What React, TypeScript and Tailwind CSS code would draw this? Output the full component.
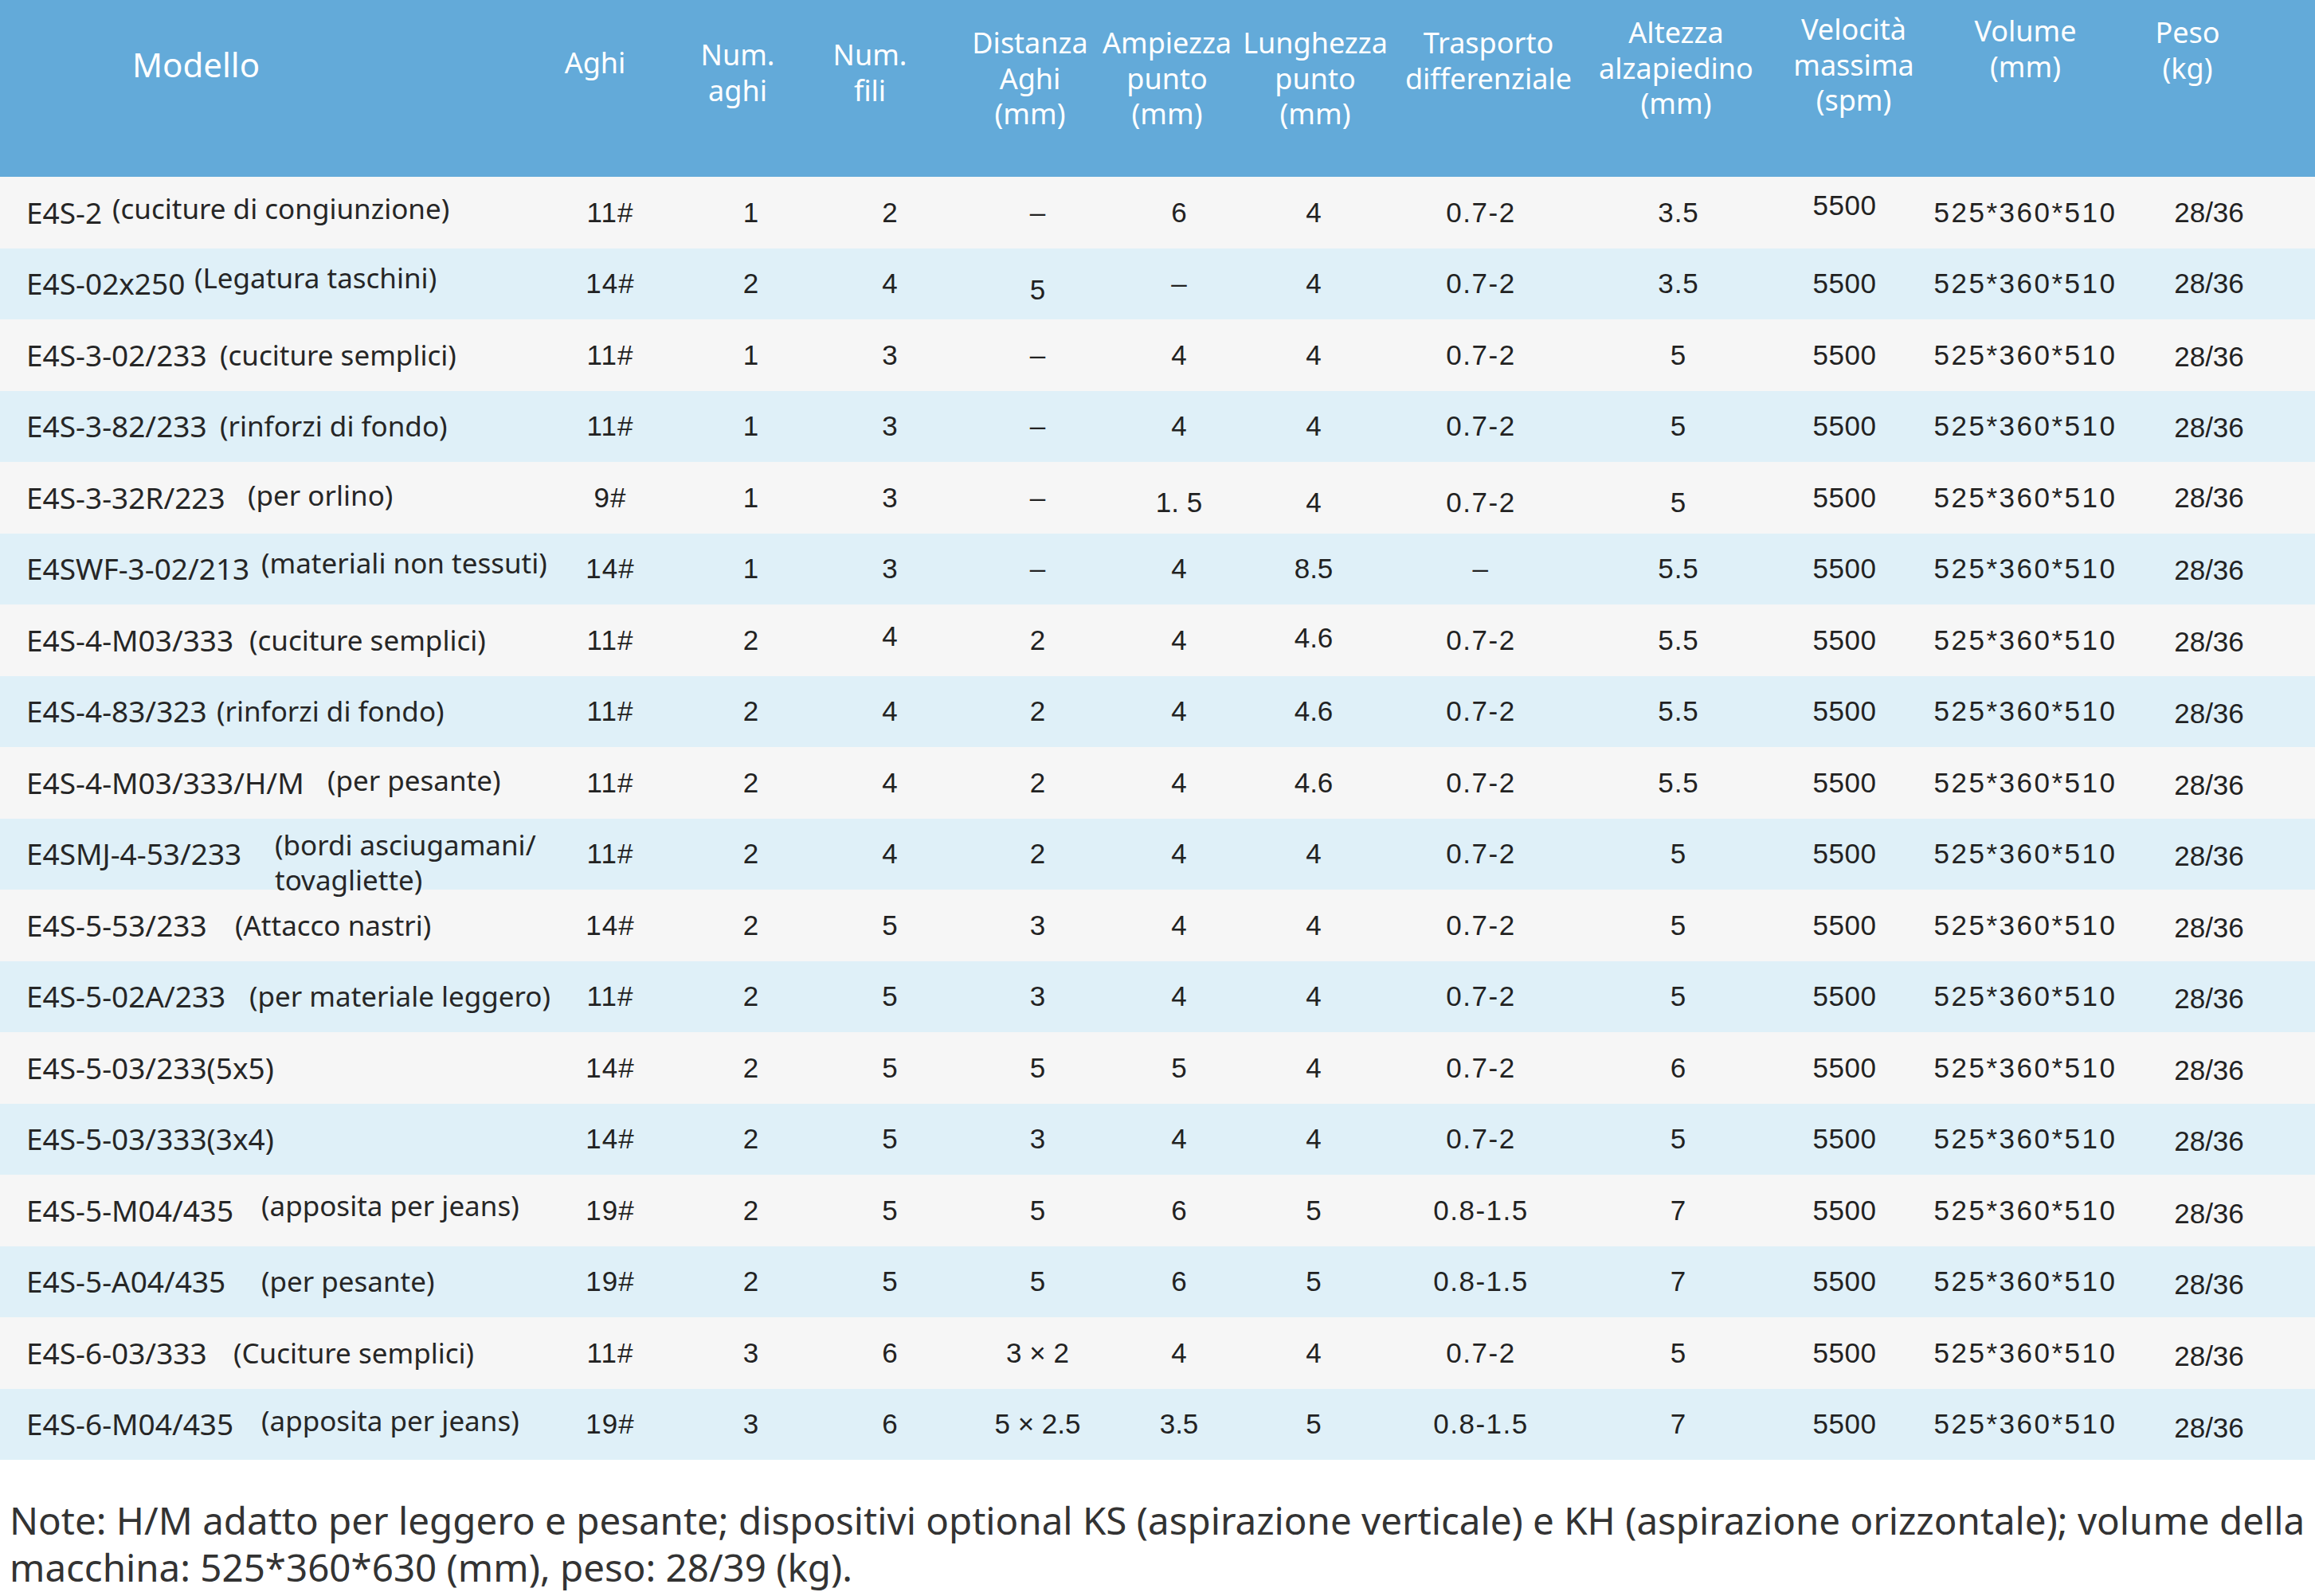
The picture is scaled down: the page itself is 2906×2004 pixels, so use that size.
import React from "react";

type Col = { hdr: string[]; hcls: string; dcls: string };

const cols: Col[] = [
  { hdr: ["Aghi"], hcls: "pt-[57px] pr-[61px]", dcls: "pr-[23px] tracking-[1px]" },
  { hdr: ["Num.", "aghi"], hcls: "pt-[47px] pr-[33px]", dcls: "" },
  { hdr: ["Num.", "fili"], hcls: "pt-[47px] pr-[57px]", dcls: "pr-[7px]" },
  { hdr: ["Distanza", "Aghi", "(mm)"], hcls: "pt-[32px] pr-[19px]", dcls: "" },
  { hdr: ["Ampiezza", "punto", "(mm)"], hcls: "pt-[32px] pr-[30px]", dcls: "" },
  { hdr: ["Lunghezza", "punto", "(mm)"], hcls: "pt-[32px] pr-[18px]", dcls: "pr-[22px]" },
  { hdr: ["Trasporto", "differenziale"], hcls: "pt-[32px]", dcls: "pr-[19px] tracking-[1.5px]" },
  { hdr: ["Altezza", "alzapiedino", "(mm)"], hcls: "pt-[19px] pl-[14px]", dcls: "pl-[20px] tracking-[1px]" },
  { hdr: ["Velocità", "massima", "(spm)"], hcls: "pt-[15px] pl-[15px]", dcls: "pr-[8px] tracking-[0.5px]" },
  { hdr: ["Volume", "(mm)"], hcls: "pt-[17px]", dcls: "tracking-[2.5px]" },
  { hdr: ["Peso", "(kg)"], hcls: "pt-[19px] pr-[71px]", dcls: "pr-[17px]" },
];

type Row = {
  model: string;
  desc?: string[];
  w: string;
  d?: string;
  v: string[];
  off?: Record<number, string>;
};

const V = "525*360*510";
const P = "28/36";
const D = "–";

const rows: Row[] = [
  { model: "E4S-2", desc: ["(cuciture di congiunzione)"], w: "w-[108px]", d: "mb-[10px]", v: ["11#", "1", "2", D, "6", "4", "0.7-2", "3.5", "5500", V, P], off: { 8: "pb-[18px]" } },
  { model: "E4S-02x250", desc: ["(Legatura taschini)"], w: "w-[211px]", d: "mb-[14px]", v: ["14#", "2", "4", "5", D, "4", "0.7-2", "3.5", "5500", V, P], off: { 3: "pt-[16px]" } },
  { model: "E4S-3-02/233", desc: ["(cuciture semplici)"], w: "w-[243px]", v: ["11#", "1", "3", D, "4", "4", "0.7-2", "5", "5500", V, P], off: { 10: "pt-[4px]" } },
  { model: "E4S-3-82/233", desc: ["(rinforzi di fondo)"], w: "w-[243px]", v: ["11#", "1", "3", D, "4", "4", "0.7-2", "5", "5500", V, P], off: { 10: "pt-[4px]" } },
  { model: "E4S-3-32R/223", desc: ["(per orlino)"], w: "w-[278px]", d: "mb-[6px]", v: ["9#", "1", "3", D, "1. 5", "4", "0.7-2", "5", "5500", V, P], off: { 4: "pt-[12px]", 5: "pt-[12px]", 6: "pt-[12px]", 7: "pt-[12px]" } },
  { model: "E4SWF-3-02/213", desc: ["(materiali non tessuti)"], w: "w-[295px]", d: "mb-[14px]", v: ["14#", "1", "3", D, "4", "8.5", D, "5.5", "5500", V, P], off: { 10: "pt-[4px]" } },
  { model: "E4S-4-M03/333", desc: ["(cuciture semplici)"], w: "w-[280px]", v: ["11#", "2", "4", "2", "4", "4.6", "0.7-2", "5.5", "5500", V, P], off: { 2: "pb-[10px]", 5: "pb-[6px]", 10: "pt-[4px]" } },
  { model: "E4S-4-83/323", desc: ["(rinforzi di fondo)"], w: "w-[239px]", v: ["11#", "2", "4", "2", "4", "4.6", "0.7-2", "5.5", "5500", V, P], off: { 10: "pt-[6px]" } },
  { model: "E4S-4-M03/333/H/M", desc: ["(per pesante)"], w: "w-[378px]", d: "mb-[6px]", v: ["11#", "2", "4", "2", "4", "4.6", "0.7-2", "5.5", "5500", V, P], off: { 10: "pt-[6px]" } },
  { model: "E4SMJ-4-53/233", desc: ["(bordi asciugamani/", "tovagliette)"], w: "w-[312px]", v: ["11#", "2", "4", "2", "4", "4", "0.7-2", "5", "5500", V, P], off: { 10: "pt-[6px]" } },
  { model: "E4S-5-53/233", desc: ["(Attacco nastri)"], w: "w-[262px]", v: ["14#", "2", "5", "3", "4", "4", "0.7-2", "5", "5500", V, P], off: { 10: "pt-[6px]" } },
  { model: "E4S-5-02A/233", desc: ["(per materiale leggero)"], w: "w-[280px]", v: ["11#", "2", "5", "3", "4", "4", "0.7-2", "5", "5500", V, P], off: { 10: "pt-[6px]" } },
  { model: "E4S-5-03/233(5x5)", w: "w-auto", v: ["14#", "2", "5", "5", "5", "4", "0.7-2", "6", "5500", V, P], off: { 10: "pt-[6px]" } },
  { model: "E4S-5-03/333(3x4)", w: "w-auto", v: ["14#", "2", "5", "3", "4", "4", "0.7-2", "5", "5500", V, P], off: { 10: "pt-[6px]" } },
  { model: "E4S-5-M04/435", desc: ["(apposita per jeans)"], w: "w-[295px]", d: "mb-[12px]", v: ["19#", "2", "5", "5", "6", "5", "0.8-1.5", "7", "5500", V, P], off: { 10: "pt-[8px]" } },
  { model: "E4S-5-A04/435", desc: ["(per pesante)"], w: "w-[295px]", v: ["19#", "2", "5", "5", "6", "5", "0.8-1.5", "7", "5500", V, P], off: { 10: "pt-[8px]" } },
  { model: "E4S-6-03/333", desc: ["(Cuciture semplici)"], w: "w-[260px]", v: ["11#", "3", "6", "3 × 2", "4", "4", "0.7-2", "5", "5500", V, P], off: { 10: "pt-[8px]" } },
  { model: "E4S-6-M04/435", desc: ["(apposita per jeans)"], w: "w-[295px]", d: "mb-[8px]", v: ["19#", "3", "6", "5 × 2.5", "3.5", "5", "0.8-1.5", "7", "5500", V, P], off: { 10: "pt-[10px]" } },
];

const grid =
  "grid grid-cols-[700px_155px_175px_181px_183px_172px_188px_229px_228px_217px_229px_249px]";

export default function App() {
  return (
    <div className="w-[2906px] min-h-[2004px] bg-white">
      {/* header */}
      <div
        className={`${grid} h-[222px] bg-[#63aad9] text-white`}
        style={{ fontFamily: '"Noto Sans", "Open Sans", sans-serif' }}
      >
        <div className="pt-[56px] pl-[166px] text-[42px] leading-[50px]">Modello</div>
        {cols.map((c, i) => (
          <div
            key={i}
            className={`flex flex-col items-center text-[36px] leading-[44.5px] whitespace-nowrap ${c.hcls}`}
          >
            {c.hdr.map((l, j) => (
              <span key={j}>{l}</span>
            ))}
          </div>
        ))}
      </div>

      {/* body */}
      {rows.map((r, ri) => (
        <div
          key={ri}
          className={`${grid} h-[89.5px] ${ri % 2 === 0 ? "bg-[#f6f6f6]" : "bg-[#dff0f8]"}`}
        >
          <div
            className="flex items-center pl-[33px] text-[#262626] whitespace-nowrap"
            style={{ fontFamily: '"Noto Sans", "Open Sans", sans-serif' }}
          >
            <span className={`text-[37px] leading-[44px] shrink-0 ${r.w}`}>{r.model}</span>
            {r.desc &&
              (r.desc.length > 1 ? (
                <span className="relative z-10 h-[44px] mb-[22px] text-[35px] leading-[44px] flex flex-col">
                  {r.desc.map((d, k) => (
                    <span key={k}>{d}</span>
                  ))}
                </span>
              ) : (
                <span className={`text-[35px] leading-[44px] ${r.d ?? ""}`}>{r.desc[0]}</span>
              ))}
          </div>
          {r.v.map((val, ci) => (
            <div
              key={ci}
              className={`flex items-center justify-center text-[35px] text-[#222] whitespace-nowrap ${cols[ci].dcls} ${r.off && r.off[ci] ? r.off[ci] : ""}`}
              style={{ fontFamily: '"Liberation Sans", Arial, sans-serif' }}
            >
              {val}
            </div>
          ))}
        </div>
      ))}

      {/* note */}
      <div
        className="mt-[46px] pl-[12px] text-[47.5px] leading-[59px] text-[#333] whitespace-nowrap"
        style={{ fontFamily: '"Noto Sans", "Open Sans", sans-serif' }}
      >
        <div>
          Note: H/M adatto per leggero e pesante; dispositivi optional KS (aspirazione verticale) e KH
          (aspirazione orizzontale); volume della
        </div>
        <div>macchina: 525*360*630 (mm), peso: 28/39 (kg).</div>
      </div>
    </div>
  );
}
